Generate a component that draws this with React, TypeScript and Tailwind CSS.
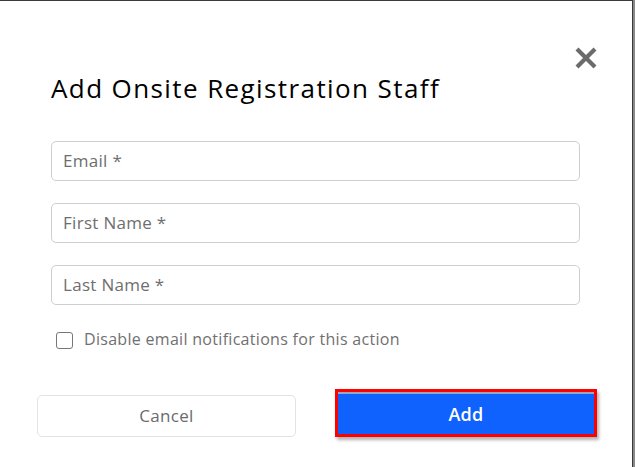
import React from "react";

export default function App() {
  return (
    <div className="w-[635px] h-[467px] flex bg-[#8a8a8a]" style={{ fontFamily: '"Open Sans", "Noto Sans", sans-serif' }}>
      <div className="w-[633px] h-[467px] bg-white border-t border-r border-[#3a3a3a] relative">
        <button className="absolute left-[573px] top-[44px] w-[26px] h-[26px] flex items-center justify-center">
          <svg width="24" height="24" viewBox="0 0 24 24">
            <path d="M3 3 L21 21 M21 3 L3 21" stroke="#6b6b6b" strokeWidth="4.2" strokeLinecap="butt" />
          </svg>
        </button>
        <div className="pl-[51px] pr-[52px] pt-[70px]">
          <h2 className="text-[26px] leading-[34px] font-medium text-black tracking-[1.4px]">Add Onsite Registration Staff</h2>
          <div className="mt-[36px] flex flex-col gap-[22px]">
            {["Email *", "First Name *", "Last Name *"].map((p) => (
              <div key={p} className="h-[40px] border border-[#cfcfcf] rounded-[5px] flex items-center px-[11px] text-[17px] tracking-[0.3px] text-[#6e6e6e]">
                {p}
              </div>
            ))}
          </div>
          <label className="mt-[24px] ml-[5px] flex items-center gap-[11px] text-[16px] tracking-[0.3px] text-[#707070]">
            <span className="w-[17px] h-[17px] border-[1.5px] border-[#777] rounded-[3px] bg-white" />
            <span className="-mt-[2px]">Disable email notifications for this action</span>
          </label>
        </div>
        <div className="mt-[44px] flex pl-[37px]">
          <button className="w-[259px] h-[42px] border border-[#e3e3e3] rounded-[5px] text-[17px] tracking-[0.3px] text-[#6b6b6b] bg-white">Cancel</button>
          <div className="ml-[39px] mt-[-6px] w-[262px] h-[48px] border-[3px] border-[#ff0000] shadow-[2px_3px_3px_rgba(0,0,0,0.3)] p-0">
            <button className="w-full h-full bg-[#0f62fe] text-white text-[18px] font-semibold tracking-[0.3px] border-t-2 border-[#9aa6c0]">Add</button>
          </div>
        </div>
      </div>
    </div>
  );
}
